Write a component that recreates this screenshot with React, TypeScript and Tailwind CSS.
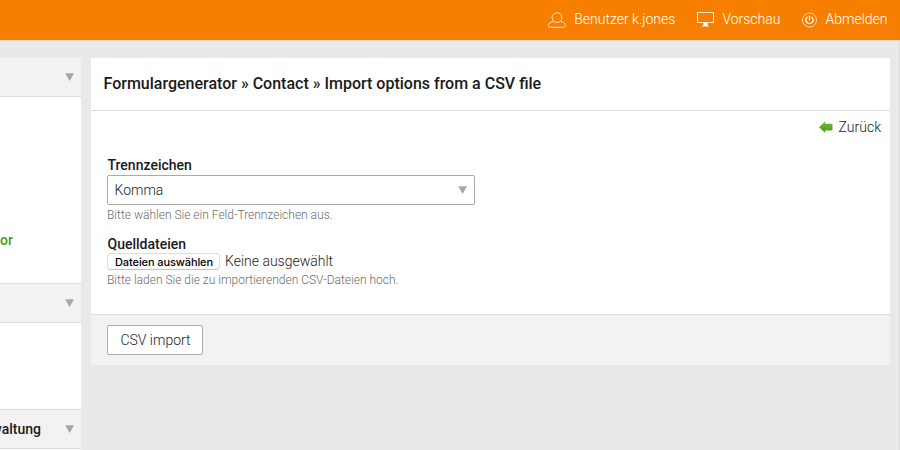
import type { ReactNode } from "react";

function Triangle({ className = "" }: { className?: string }) {
  return (
    <svg className={`shrink-0 ${className}`} width="9" height="8" viewBox="0 0 9 8" fill="#a6a6a6">
      <path d="M0.2 0.3h8.8L4.6 8z" />
    </svg>
  );
}

function PanelHeader({ label, className = "" }: { label?: string; className?: string }) {
  return (
    <div className={`flex shrink-0 items-center justify-end border-b border-[#dddddd] bg-[#f2f2f2] pr-[7px] ${className}`}>
      {label && <span className="mr-[24px] shrink-0 whitespace-nowrap font-medium">{label}</span>}
      <Triangle />
    </div>
  );
}

function TopLink({ icon, children, className = "" }: { icon: ReactNode; children: ReactNode; className?: string }) {
  return (
    <a className={`flex items-center whitespace-nowrap ${className}`}>
      {icon}
      <span className="pb-0.5">{children}</span>
    </a>
  );
}

function UserIcon() {
  return (
    <svg className="mr-[8px]" width="18" height="16" viewBox="0 0 18 16" fill="none" stroke="#ffe3c4" strokeWidth="1">
      <circle cx="9" cy="5.6" r="4.9" />
      <path d="M5.5 9.6C2 10.5.6 11.2.6 13.3c0 1.4.5 2 1.8 2h13.2c1.3 0 1.8-.6 1.8-2 0-2.1-1.4-2.8-4.9-3.7" />
    </svg>
  );
}

function ScreenIcon() {
  return (
    <svg className="mr-[8px]" width="17" height="15" viewBox="0 0 17 15" fill="none">
      <rect x=".5" y=".5" width="16" height="10" stroke="#ffe9d0" />
      <path d="M6.5 10.5h4v2.3l1.6 1.7h-7.2l1.6-1.7z" fill="#fff" />
    </svg>
  );
}

function PowerIcon() {
  return (
    <svg className="mr-[8px]" width="15" height="16" viewBox="0 0 15 16" fill="none">
      <circle cx="7.5" cy="8" r="7" stroke="#ffe3c4" strokeWidth=".9" />
      <path d="M5.5 5a3.6 3.6 0 1 0 4 0M7.5 3.8v4.4" stroke="#fff" strokeWidth="1.3" />
    </svg>
  );
}

function Sidebar() {
  return (
    <aside className="flex w-[81px] shrink-0 flex-col overflow-hidden bg-white">
      <PanelHeader className="h-[39px]" />
      <div className="h-[186px] shrink-0 pt-[133px] leading-5">
        <span className="font-medium text-[#4b9a0b]">or</span>
      </div>
      <PanelHeader className="h-10 border-t" />
      <div className="h-[86px] shrink-0" />
      <PanelHeader className="h-10 border-t" label="waltung" />
    </aside>
  );
}

function MainPanel() {
  return (
    <main className="ml-[10px] h-[307px] w-[799px] bg-white">
      <h1 className="h-[53px] border-b border-[#dddddd] pl-[12.5px] pt-[15px] text-base font-medium leading-[22px]">
        <span className="inline-block whitespace-nowrap">Formulargenerator » Contact » Import options from a CSV file</span>
      </h1>
      <div className="flex h-[45px] items-start justify-end pr-[9px] pt-[6px]">
        <svg className="mr-[6px] mt-[4px]" width="14" height="12" viewBox="0 0 14 12">
          <defs>
            <linearGradient id="arrow" x1="0" y1="0" x2="0" y2="1">
              <stop offset="0" stopColor="#77bd3d" />
              <stop offset="1" stopColor="#4d961c" />
            </linearGradient>
          </defs>
          <path d="M0 6.2 6.2.2V2.8h6.6q.7 0 .7.7v5.2q0 .7-.7.7H6.2V12z" fill="url(#arrow)" />
        </svg>
        <a className="leading-5">Zurück</a>
      </div>
      <div className="h-[158px] pl-4">
        <label className="block h-[19px] whitespace-nowrap pl-[0.5px] font-medium leading-[18px]">Trennzeichen</label>
        <div className="flex h-[30px] w-[368px] items-center justify-between rounded-[2px] border border-[#aaaaaa] pl-[6.5px] pr-[7px]">
          <span>Komma</span>
          <Triangle />
        </div>
        <p className="h-[30px] pt-px text-xs leading-[18px] text-[#6c6c6c]">Bitte wählen Sie ein Feld-Trennzeichen aus.</p>
        <label className="block h-[17px] whitespace-nowrap pl-[0.5px] font-medium leading-[18px]">Quelldateien</label>
        <div className="flex h-[18px] items-center">
          <button className="h-[17px] w-[113px] whitespace-nowrap rounded-[4px] border border-[#dedede] border-b-[#c4c4c4] bg-white pl-px pt-px font-['Inter',sans-serif] text-[11px] font-medium leading-[15px] tracking-[-0.1px] text-black">
            Dateien auswählen
          </button>
          <span className="ml-[5px] leading-[18px]">Keine ausgewählt</span>
        </div>
        <p className="pt-px text-xs leading-[18px] text-[#6c6c6c]">Bitte laden Sie die zu importierenden CSV-Dateien hoch.</p>
      </div>
      <footer className="h-[51px] border-t border-[#dddddd] bg-[#f2f2f2] pl-4 pt-[10px]">
        <button className="h-[30px] w-24 rounded-[2px] border border-[#aaaaaa] bg-white pl-px leading-[28px]">CSV import</button>
      </footer>
    </main>
  );
}

export default function App() {
  return (
    <div className="flex h-[450px] w-[900px] flex-col overflow-hidden bg-[#e9e9e9] font-['Roboto',sans-serif] text-sm font-light text-[#1a1a1a]">
      <header className="flex h-10 shrink-0 items-center justify-end bg-[#f77f00] pb-px pr-[12.5px] text-white">
        <TopLink icon={<UserIcon />}>Benutzer k.jones</TopLink>
        <TopLink icon={<ScreenIcon />} className="ml-[22px]">Vorschau</TopLink>
        <TopLink icon={<PowerIcon />} className="ml-[22px]">Abmelden</TopLink>
      </header>
      <div className="flex grow border-r border-t border-r-[#dadada] border-t-[#ead8c8] pt-[17px]">
        <Sidebar />
        <MainPanel />
      </div>
    </div>
  );
}
